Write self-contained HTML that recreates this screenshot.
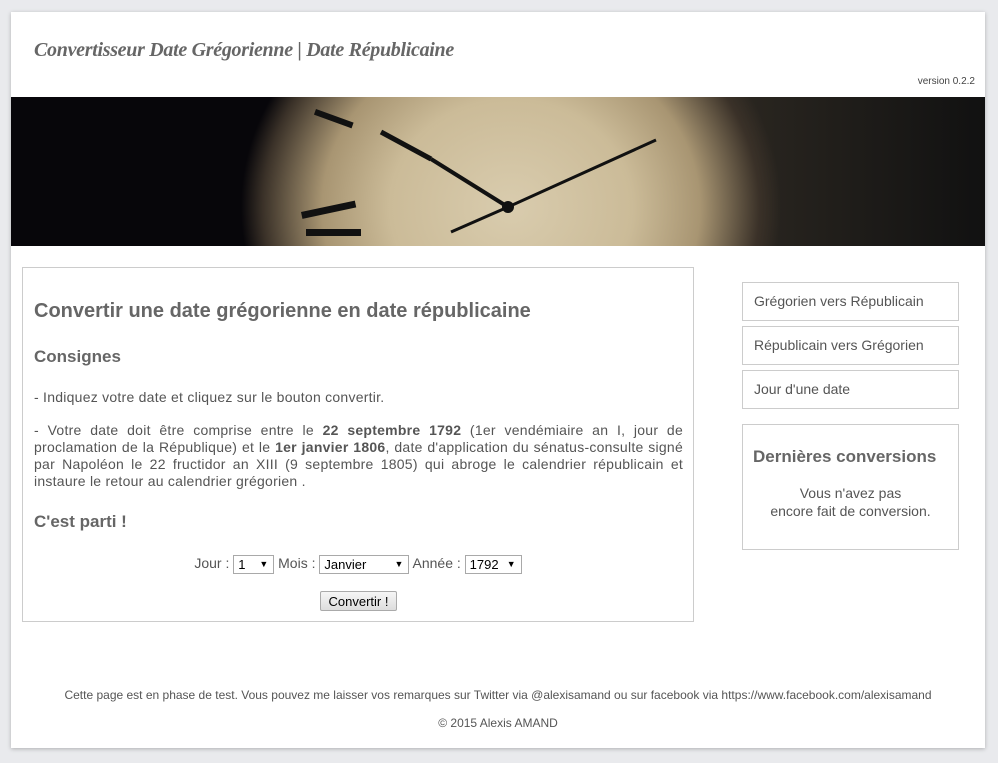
<!DOCTYPE html>
<html><head><meta charset="utf-8"><style>
body{margin:0;background:#e9eaed;font-family:"Liberation Sans",sans-serif;color:#555;}
.card{position:absolute;left:11px;top:12px;width:974px;height:736px;background:#fff;box-shadow:0 1px 4px rgba(0,0,0,.25);}
h1{position:absolute;left:23px;top:27px;margin:0;font:italic bold 20px "Liberation Serif",serif;color:#666;letter-spacing:-0.3px}
.ver{position:absolute;right:10px;top:64px;font-size:10px;color:#444}
.banner{position:absolute;left:0;top:85px;width:974px;height:149px;overflow:hidden;
background:radial-gradient(ellipse 270px 240px at 500px 110px,#d9ccae 0,#cbbb98 45%,#a89572 70%,#3a3128 92%,transparent 100%),linear-gradient(90deg,#07060a 0,#07060a 27%,#2a2620 75%,#111 100%);}
.banner svg{position:absolute;left:0;top:0}
.main{position:absolute;left:11px;top:255px;width:670px;height:353px;border:1px solid #ccc;}
.main h2{margin:0;position:absolute;left:11px;top:32px;font-size:20px;color:#666}
.main h3{margin:0;position:absolute;left:11px;font-size:17px;color:#666}
.main p{position:absolute;left:11px;width:649px;margin:0;font-size:14px;line-height:17px;text-align:justify;color:#555;letter-spacing:0.25px}
.main b{color:#555}
.form{position:absolute;left:0;width:670px;text-align:center;font-size:14px;top:287px}
.sel{display:inline-block;border:1px solid #a9a9a9;font-size:13px;line-height:17px;text-align:left;padding-left:4px;color:#000;position:relative;vertical-align:middle;box-sizing:border-box;height:19px}
.sel:after{content:"▼";position:absolute;right:5px;top:0;font-size:9px}
.btn{position:absolute;left:297px;top:323px;width:77px;height:20px;border:1px solid #aaa;border-radius:2px;background:linear-gradient(#f6f6f6,#ddd);font-size:13px;color:#000;text-align:center;line-height:20px;box-sizing:border-box}
.item{position:absolute;left:731px;font-size:14px;line-height:37px;padding-left:11px;box-sizing:border-box;width:217px;height:39px;border:1px solid #ccc}
.last{position:absolute;left:731px;top:412px;width:217px;height:126px;border:1px solid #ccc;box-sizing:border-box;text-align:center}
.last h4{margin:22px 0 0 10px;text-align:left;font-size:17px;color:#666}
.last div{font-size:14px;margin-top:17px;line-height:18px}
.foot{position:absolute;left:0;width:974px;text-align:center;font-size:12px;color:#555}
</style></head><body>
<div class="card">
<h1>Convertisseur Date Grégorienne | Date Républicaine</h1>
<div class="ver">version 0.2.2</div>
<div class="banner"><svg width="974" height="149">
<line x1="370" y1="35" x2="420" y2="62" stroke="#111" stroke-width="5"/>
<line x1="420" y1="62" x2="497" y2="110" stroke="#111" stroke-width="4"/>
<line x1="497" y1="110" x2="645" y2="43" stroke="#111" stroke-width="3"/>
<line x1="497" y1="110" x2="440" y2="135" stroke="#111" stroke-width="3"/>
<circle cx="497" cy="110" r="6" fill="#111"/>
<rect x="290" y="115" width="55" height="7" fill="#111" transform="rotate(-12 290 115)"/>
<rect x="295" y="132" width="55" height="7" fill="#111"/>
<rect x="305" y="12" width="40" height="6" fill="#111" transform="rotate(20 305 12)"/>
</svg></div>
<div class="main">
<h2>Convertir une date grégorienne en date républicaine</h2>
<h3 style="top:79px">Consignes</h3>
<p style="top:121px">- Indiquez votre date et cliquez sur le bouton convertir.</p>
<p style="top:154px">- Votre date doit être comprise entre le <b>22 septembre 1792</b> (1er vendémiaire an I, jour de proclamation de la République) et le <b>1er janvier 1806</b>, date d'application du sénatus-consulte signé par Napoléon le 22 fructidor an XIII (9 septembre 1805) qui abroge le calendrier républicain et instaure le retour au calendrier grégorien .</p>
<h3 style="top:244px">C'est parti !</h3>
<div class="form">Jour : <span class="sel" style="width:41px">1</span> Mois : <span class="sel" style="width:90px">Janvier</span> Année : <span class="sel" style="width:57px">1792</span></div>
<div class="btn">Convertir !</div>
</div>
<div class="item" style="top:270px">Grégorien vers Républicain</div>
<div class="item" style="top:314px">Républicain vers Grégorien</div>
<div class="item" style="top:358px">Jour d'une date</div>
<div class="last"><h4>Dernières conversions</h4><div>Vous n'avez pas<br>encore fait de conversion.</div></div>
<div class="foot" style="top:676px">Cette page est en phase de test. Vous pouvez me laisser vos remarques sur Twitter via @alexisamand ou sur facebook via https://www.facebook.com/alexisamand</div>
<div class="foot" style="top:704px">© 2015 Alexis AMAND</div>
</div>
</body></html>
